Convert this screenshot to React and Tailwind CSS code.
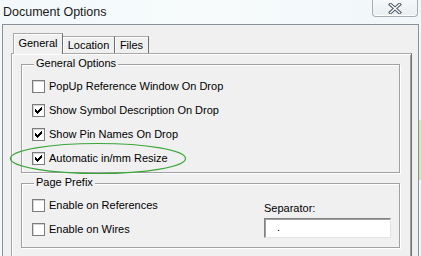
import React from "react";

const CHECK = [
  "......#",
  ".....##",
  "#...###",
  "##.###.",
  "#####..",
  ".###...",
  "..#....",
];

function Check({ checked }) {
  const rects = [];
  if (checked) {
    CHECK.forEach((row, y) =>
      row.split("").forEach((c, x) => {
        if (c === "#") rects.push(<rect key={x + "-" + y} x={x + 2} y={y + 2} width="1" height="1" fill="#000" />);
      })
    );
  }
  return (
    <div className="w-[13px] h-[13px] shrink-0 border border-[#7d7d7d] bg-white shadow-[inset_1px_1px_0_#d4d4d4]">
      {checked && (
        <svg width="11" height="11" viewBox="0 0 11 11" shapeRendering="crispEdges">
          {rects}
        </svg>
      )}
    </div>
  );
}

function Row({ checked, label }) {
  return (
    <div className="flex items-center gap-[4px] h-[13px]">
      <Check checked={checked} />
      <span className="text-[11px] leading-[13px] whitespace-nowrap">{label}</span>
    </div>
  );
}

function GroupBox({ title, className, children }) {
  return (
    <div className={"relative border border-[#a0a0a0] shadow-[inset_1px_1px_0_#ffffff,1px_1px_0_#ffffff] " + className}>
      <span className="absolute left-[12px] top-[-8px] px-[2px] bg-[#f0f0f0] text-[11px] leading-[13px] whitespace-nowrap">
        {title}
      </span>
      {children}
    </div>
  );
}

export default function App() {
  return (
    <div className="relative w-[421px] h-[256px] overflow-hidden bg-[#f4f8fa] text-[#000] font-['Liberation_Sans',Arial,sans-serif]">
      {/* Title bar */}
      <div className="h-[24px] flex items-start justify-between bg-gradient-to-r from-[#f3f8fa] via-[#f7fbfc] to-[#f1f6f8]">
        <div className="pl-[3px] pt-[5px] text-[12.5px] leading-[15px] text-[#1a1a1a] whitespace-nowrap">Document Options</div>
        <div className="mr-[3px] w-[46px] h-[17px] rounded-b-[4px] border border-t-0 border-[#a6adb5] bg-gradient-to-b from-[#f6f8fa] to-[#e9eef2] flex items-center justify-center shadow-[inset_0_-1px_0_#ffffff]">
          <svg width="14" height="11" viewBox="0 0 14 11">
            <path d="M2.5 1.5 L11.5 9.5 M11.5 1.5 L2.5 9.5" stroke="#4f5b69" strokeWidth="3.4" strokeLinecap="square" />
            <path d="M2.5 1.5 L11.5 9.5 M11.5 1.5 L2.5 9.5" stroke="#ffffff" strokeWidth="1.4" strokeLinecap="square" />
          </svg>
        </div>
      </div>

      {/* Dialog body */}
      <div className="mx-[2px] h-[232px] border-t border-x border-[#8a9097] bg-[#f0f0f0] pl-[8px] pt-[8px]">
        {/* Tabs */}
        <div className="flex items-end h-[20px] pl-[2px] relative z-10">
          <div className="w-[50px] h-[21px] -mb-[1px] bg-[#f0f0f0] border-t border-l border-r border-t-[#a8a8a8] border-l-[#a8a8a8] border-r-[#6e6e6e] shadow-[inset_1px_1px_0_#ffffff] text-[11px] leading-[13px] text-center pt-[3px]">
            General
          </div>
          <div className="w-[52px] h-[17px] border-t border-r border-t-[#a8a8a8] border-r-[#6e6e6e] shadow-[inset_1px_1px_0_#ffffff] text-[11px] leading-[13px] text-center pt-[2px]">
            Location
          </div>
          <div className="w-[34px] h-[17px] border-t border-r border-t-[#a8a8a8] border-r-[#6e6e6e] shadow-[inset_1px_1px_0_#ffffff] text-[11px] leading-[13px] text-center pt-[2px]">
            Files
          </div>
        </div>

        {/* Tab panel */}
        <div className="w-[401px] h-[210px] border-t border-l border-r border-t-[#a8a8a8] border-l-[#a8a8a8] border-r-[#6e6e6e] shadow-[inset_1px_1px_0_#ffffff,inset_-1px_0_0_#a0a0a0] pl-[9px] pt-[10px] pr-[11px] flex flex-col">
          <GroupBox title="General Options" className="h-[109px] pl-[10px] pt-[15px] flex flex-col gap-[11px]">
            <Row checked={false} label="PopUp Reference Window On Drop" />
            <Row checked={true} label="Show Symbol Description On Drop" />
            <Row checked={true} label="Show Pin Names On Drop" />
            <Row checked={true} label="Automatic in/mm Resize" />
          </GroupBox>

          <GroupBox title="Page Prefix" className="mt-[10px] h-[65px] pl-[10px] pr-[8px] pt-[15px] flex items-start justify-between">
            <div className="flex flex-col gap-[11px]">
              <Row checked={false} label="Enable on References" />
              <Row checked={false} label="Enable on Wires" />
            </div>
            <div className="flex flex-col w-[127px] pt-[3px]">
              <span className="text-[11px] leading-[13px] whitespace-nowrap">Separator:</span>
              <div className="mt-[3px] h-[20px] bg-white border-t border-l border-r border-b border-t-[#828282] border-l-[#828282] border-r-[#e3e3e3] border-b-[#e3e3e3] shadow-[inset_1px_1px_0_#a0a0a0] pl-[12px] text-[11px] leading-[16px]">
                .
              </div>
            </div>
          </GroupBox>
        </div>
      </div>

      {/* Right desktop strip */}
      <div className="absolute right-0 top-[120px] w-[2px] h-[60px] bg-[#cfe8b8]" />

      {/* Green highlight ellipse */}
      <svg className="absolute left-[9px] top-[142px]" width="178" height="33" viewBox="0 0 178 33">
        <ellipse cx="89" cy="16.5" rx="87.5" ry="15" fill="none" stroke="#3aa53a" strokeWidth="1.2" />
      </svg>
    </div>
  );
}
